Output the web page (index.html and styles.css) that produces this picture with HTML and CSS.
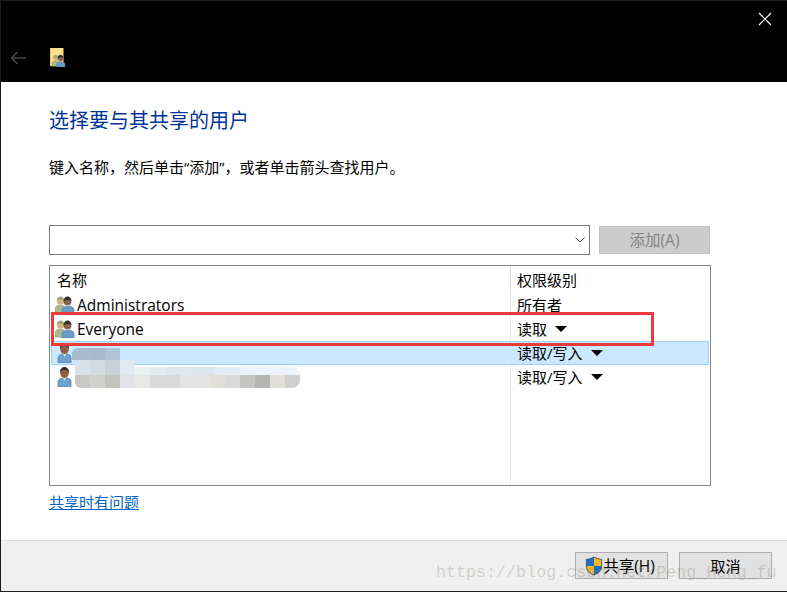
FILE: index.html
```html
<!DOCTYPE html>
<html lang="zh-CN">
<head>
    <meta charset="UTF-8">
    <title>网络访问</title>
    <link rel="stylesheet" href="styles.css">
</head>
<body>
    <svg class="defs" width="0" height="0">
        <symbol id="one" viewBox="0 0 18 20">
            <path d="M1 20v-5c0-3 3-4 5-4h3c3 0 5 1 5 4v5z" fill="#6fa3cf" stroke="#4a78a0" stroke-width=".7"/>
            <path d="M6 11l1.500 3L9 11z" fill="#dfe9f2"/>
            <ellipse cx="7.500" cy="6" rx="4.300" ry="5" fill="#8a5f42"/>
            <path d="M3 6c-.5-3.500 2-6 4.500-6s5 2.500 4.500 6c-1-2.500-2-3-4.500-3S4 3.500 3 6z" fill="#3d2a1e"/>
        </symbol>
        <symbol id="two" viewBox="0 0 20 18">
            <path d="M0 17v-4c0-2 2-3.500 4-3.500h3c2 0 3 1.500 3 3.500v4z" fill="#a9bd8c" stroke="#8c9a63" stroke-width=".6"/>
            <circle cx="5.500" cy="5" r="3.700" fill="#d9b38c"/>
            <path d="M2 5c0-3 1.500-4.500 3.500-4.500S9 2 9 4.500C7 3.500 4 3.500 2 5z" fill="#9aa86a"/>
            <path d="M7 18v-4c0-2 2-3.500 4-3.500h4c2.500 0 4 1.500 4 3.500v4z" fill="#6a9cc8" stroke="#4a78a0" stroke-width=".6"/>
            <circle cx="12.500" cy="5.500" r="3.900" fill="#8a6248"/>
            <path d="M8.500 5.500c0-3 1.800-5 4-5s4 2 4 4.500c-2-1.500-5-1.500-8 .5z" fill="#33302e"/>
        </symbol>
    </svg>
    <div class="window">
        <header class="titlebar">
            <button class="close" aria-label="关闭">
                <svg width="14" height="14" viewBox="0 0 14 14"><path d="M1 1l12 12M13 1L1 13" stroke="#fff" stroke-width="1.200" fill="none"/></svg>
            </button>
            <div class="nav">
                <svg class="back" width="16" height="14" viewBox="0 0 16 14"><path d="M16 7H1.500M7.500 1L1.500 7l6 6" stroke="#444" stroke-width="1.500" fill="none"/></svg>
                <svg class="folder" width="16" height="19" viewBox="0 0 16 19">
                    <rect x="0" y="0" width="13.500" height="18" fill="#fbdf8b"/>
                    <rect x="0" y="0" width="1" height="18" fill="#e8c468"/>
                    <use href="#two" x="1.500" y="6.500" width="14.500" height="12.500"/>
                </svg>
            </div>
        </header>

        <main class="content">
            <h1 class="heading">选择要与其共享的用户</h1>
            <p class="hint">键入名称，然后单击“添加”，或者单击箭头查找用户。</p>

            <div class="add-row">
                <div class="combo">
                    <svg width="10" height="6" viewBox="0 0 10 6"><path d="M.5.500L5 5 9.500.500" stroke="#555" fill="none"/></svg>
                </div>
                <button class="add-btn" disabled>添加(A)</button>
            </div>

            <div class="list">
                <div class="row head">
                    <div class="name">名称</div>
                    <div class="level">权限级别</div>
                </div>
                <div class="row">
                    <div class="name"><svg class="user"><use href="#two"/></svg>Administrators</div>
                    <div class="level">所有者</div>
                </div>
                <div class="row">
                    <div class="name"><svg class="user"><use href="#two"/></svg>Everyone</div>
                    <div class="level">读取<i class="caret"></i></div>
                </div>
                <div class="row selected">
                    <div class="name"><svg class="user solo"><use href="#one"/></svg></div>
                    <div class="level">读取/写入<i class="caret"></i></div>
                </div>
                <div class="row">
                    <div class="name"><svg class="user solo"><use href="#one"/></svg></div>
                    <div class="level">读取/写入<i class="caret"></i></div>
                </div>
                <div class="mark"></div>
                <!-- blurred-out user names -->
                <div class="mosaic">
                    <div class="strip s1"></div>
                    <div class="strip s2">
                        <div class="s2a"></div>
                        <div class="s2b"></div>
                    </div>
                    <div class="strip s3"></div>
                </div>
            </div>

            <a class="help" href="#">共享时有问题</a>
        </main>

        <footer class="actions">
            <button class="btn share">
                <svg width="18" height="20" viewBox="0 0 17 19">
                    <path d="M8.500 0.500C6 2 3.500 2.800 .8 3v7c0 4 3.500 7 7.700 8.500C12.700 17 16.200 14 16.200 10V3C13.500 2.800 11 2 8.500 .5z" fill="#555"/>
                    <path d="M8.500 1.500V9.500H1.700V3.800C4 3.500 6.300 2.800 8.500 1.500z" fill="#1b6fc8"/>
                    <path d="M8.500 1.500V9.500H15.300V3.800C13 3.500 10.700 2.800 8.500 1.500z" fill="#f6b81f"/>
                    <path d="M1.700 9.500H8.500V17.500C5 16.200 1.700 14 1.700 10z" fill="#f6b81f"/>
                    <path d="M15.300 9.500H8.500V17.500C12 16.200 15.300 14 15.300 10z" fill="#1b6fc8"/>
                </svg>共享(H)
            </button>
            <button class="btn">取消</button>
        </footer>

        <div class="watermark">https://blog.csdn.net/Peng_Hong_fu</div>
    </div>
</body>
</html>
```

FILE: styles.css
```css
* {
    box-sizing: border-box;
}
html, body {
    margin: 0;
    height: 100%;
}
body {
    font-family: "Open Sans", "Noto Sans CJK SC", sans-serif;
    font-size: 15px;
    color: #000;
    background: #fff;
}
.defs {
    position: absolute;
}
.window {
    position: relative;
    width: 787px;
    height: 592px;
    display: flex;
    flex-direction: column;
    border-left: 1px solid #1c1c1c;
    border-bottom: 1px solid #1c1c1c;
    overflow: hidden;
}

.titlebar {
    height: 82px;
    background: #000;
    border-top: 1px solid #1c1c1c;
    flex-shrink: 0;
    display: flex;
    flex-direction: column;
}
.close {
    align-self: flex-end;
    width: 44px;
    height: 36px;
    padding: 0;
    background: none;
    border: 0;
    display: flex;
    align-items: center;
    justify-content: center;
}
.nav {
    display: flex;
    align-items: center;
    padding: 11px 0 0 9px;
}
.back {
    margin-right: 24px;
}

.content {
    flex: 1;
    padding: 0 76px 0 48px;
}
.heading {
    margin: 24px 0 0;
    font-size: 20px;
    line-height: 30px;
    font-weight: normal;
    color: #003399;
}
.hint {
    margin: 20px 0 0;
    line-height: 22px;
}
.add-row {
    display: flex;
    margin-top: 47px;
    gap: 9px;
    align-items: flex-start;
}
.combo {
    width: 541px;
    height: 30px;
    border: 1px solid #7a7a7a;
    background: #fff;
    display: flex;
    align-items: center;
    justify-content: flex-end;
    padding-right: 4px;
}
.add-btn {
    width: 111px;
    height: 28px;
    margin-top: 1px;
    background: #cccccc;
    border: 1px solid #bfbfbf;
    color: #838383;
    font: inherit;
    font-size: 15.500px;
    padding: 0 0 2px;
}

.list {
    position: relative;
    width: 662px;
    height: 221px;
    margin-top: 10px;
    border: 1px solid #828790;
    background: linear-gradient(to right, #fff 460px, #e5e5e5 460px, #e5e5e5 461px, #fff 461px);
}
.row {
    display: flex;
    height: 24px;
    margin: 0 1px;
    line-height: 23px;
    border: 1px solid transparent;
}
.row.head {
    height: 27px;
    line-height: 28px;
    background: linear-gradient(to right, #fff 458px, #dcdcdc 458px, #dcdcdc 459px, #fff 459px, #fff 656px, #e8e8e8 656px);
}
.row.selected {
    background: #cce8ff;
    border-color: #99d1ff;
}
.name {
    width: 459px;
    padding-left: 5px;
    display: flex;
    align-items: center;
    height: 100%;
    font-size: 15.500px;
}
.row.head .name {
    font-size: 15px;
}
.row:not(.head) .name {
    padding-left: 3px;
}
.user {
    width: 20px;
    height: 18px;
    margin-right: 2px;
    flex-shrink: 0;
}
.user.solo {
    width: 18px;
    height: 20px;
    margin-left: 2px;
}
.level {
    padding-left: 6px;
    display: flex;
    align-items: center;
    height: 100%;
}
.caret {
    width: 0;
    height: 0;
    margin-left: 8px;
    border-left: 6px solid transparent;
    border-right: 6px solid transparent;
    border-top: 6px solid #000;
}
.mark {
    position: absolute;
    left: 1px;
    top: 46px;
    width: 603px;
    height: 34px;
    border: 3px solid #f03a3a;
}
.mosaic {
    position: absolute;
    left: 22px;
    top: 82px;
    width: 228px;
    filter: blur(.4px);
}
.s1 {
    width: 48px;
    height: 12px;
    border-top-left-radius: 6px;
    background: linear-gradient(to right, #a9bccf 0 18px, #a6bacd 18px 33px, #b0c4d8 33px);
}
.s2 {
    display: flex;
    height: 15px;
    margin-left: 3px;
}
.s2a {
    width: 60px;
    background: linear-gradient(to right, #d8e2ea 0 15px, #d2dbe3 15px 30px, #c8d0d8 30px 45px, #e0eaf3 45px);
}
.s2b {
    width: 165px;
    height: 8px;
    margin-top: 7px;
    border-top-right-radius: 8px;
    background: linear-gradient(to right, #eaf1f6 0 15px, #e5ecf1 15px 30px, #dfe7ed 30px 60px, #dbe6ed 60px 80px, #e2ecf5 80px 105px, #ebf4fc 105px);
}
.s3 {
    width: 225px;
    height: 13px;
    margin-left: 3px;
    border-radius: 0 0 8px 6px;
    background: linear-gradient(to right,
        #c8c8c6 0 15px, #d0d0cf 15px 30px, #c3c3bd 30px 45px, #e2e3e8 45px 60px,
        #e8e8e4 60px 75px, #d9d9d9 75px 105px, #e3e3e3 105px 135px, #e2dfdb 135px 150px,
        #d9dad9 150px 165px, #c4c4c3 165px 180px, #b5b6b4 180px 195px, #e2dfdb 195px 210px,
        #cfcfcd 210px 225px);
}

.help {
    display: inline-block;
    margin-top: 5px;
    color: #0066cc;
    line-height: 22px;
}

.actions {
    height: 51px;
    flex-shrink: 0;
    background: #f0f0f0;
    border-top: 1px solid #dfdfdf;
    display: flex;
    justify-content: flex-end;
    gap: 11px;
    padding: 11px 15px 0 0;
}
.btn {
    width: 93px;
    height: 27px;
    padding: 0;
    background: #e1e1e1;
    border: 1px solid #adadad;
    font: inherit;
    color: #000;
    display: flex;
    align-items: center;
    justify-content: center;
}
.btn.share {
    padding-right: 3px;
    font-size: 15.500px;
}

.watermark {
    position: absolute;
    left: 435px;
    top: 563px;
    font-family: "Liberation Mono", monospace;
    font-size: 16.700px;
    line-height: 20px;
    white-space: nowrap;
    color: rgba(120, 120, 100, .28);
    pointer-events: none;
}
```
